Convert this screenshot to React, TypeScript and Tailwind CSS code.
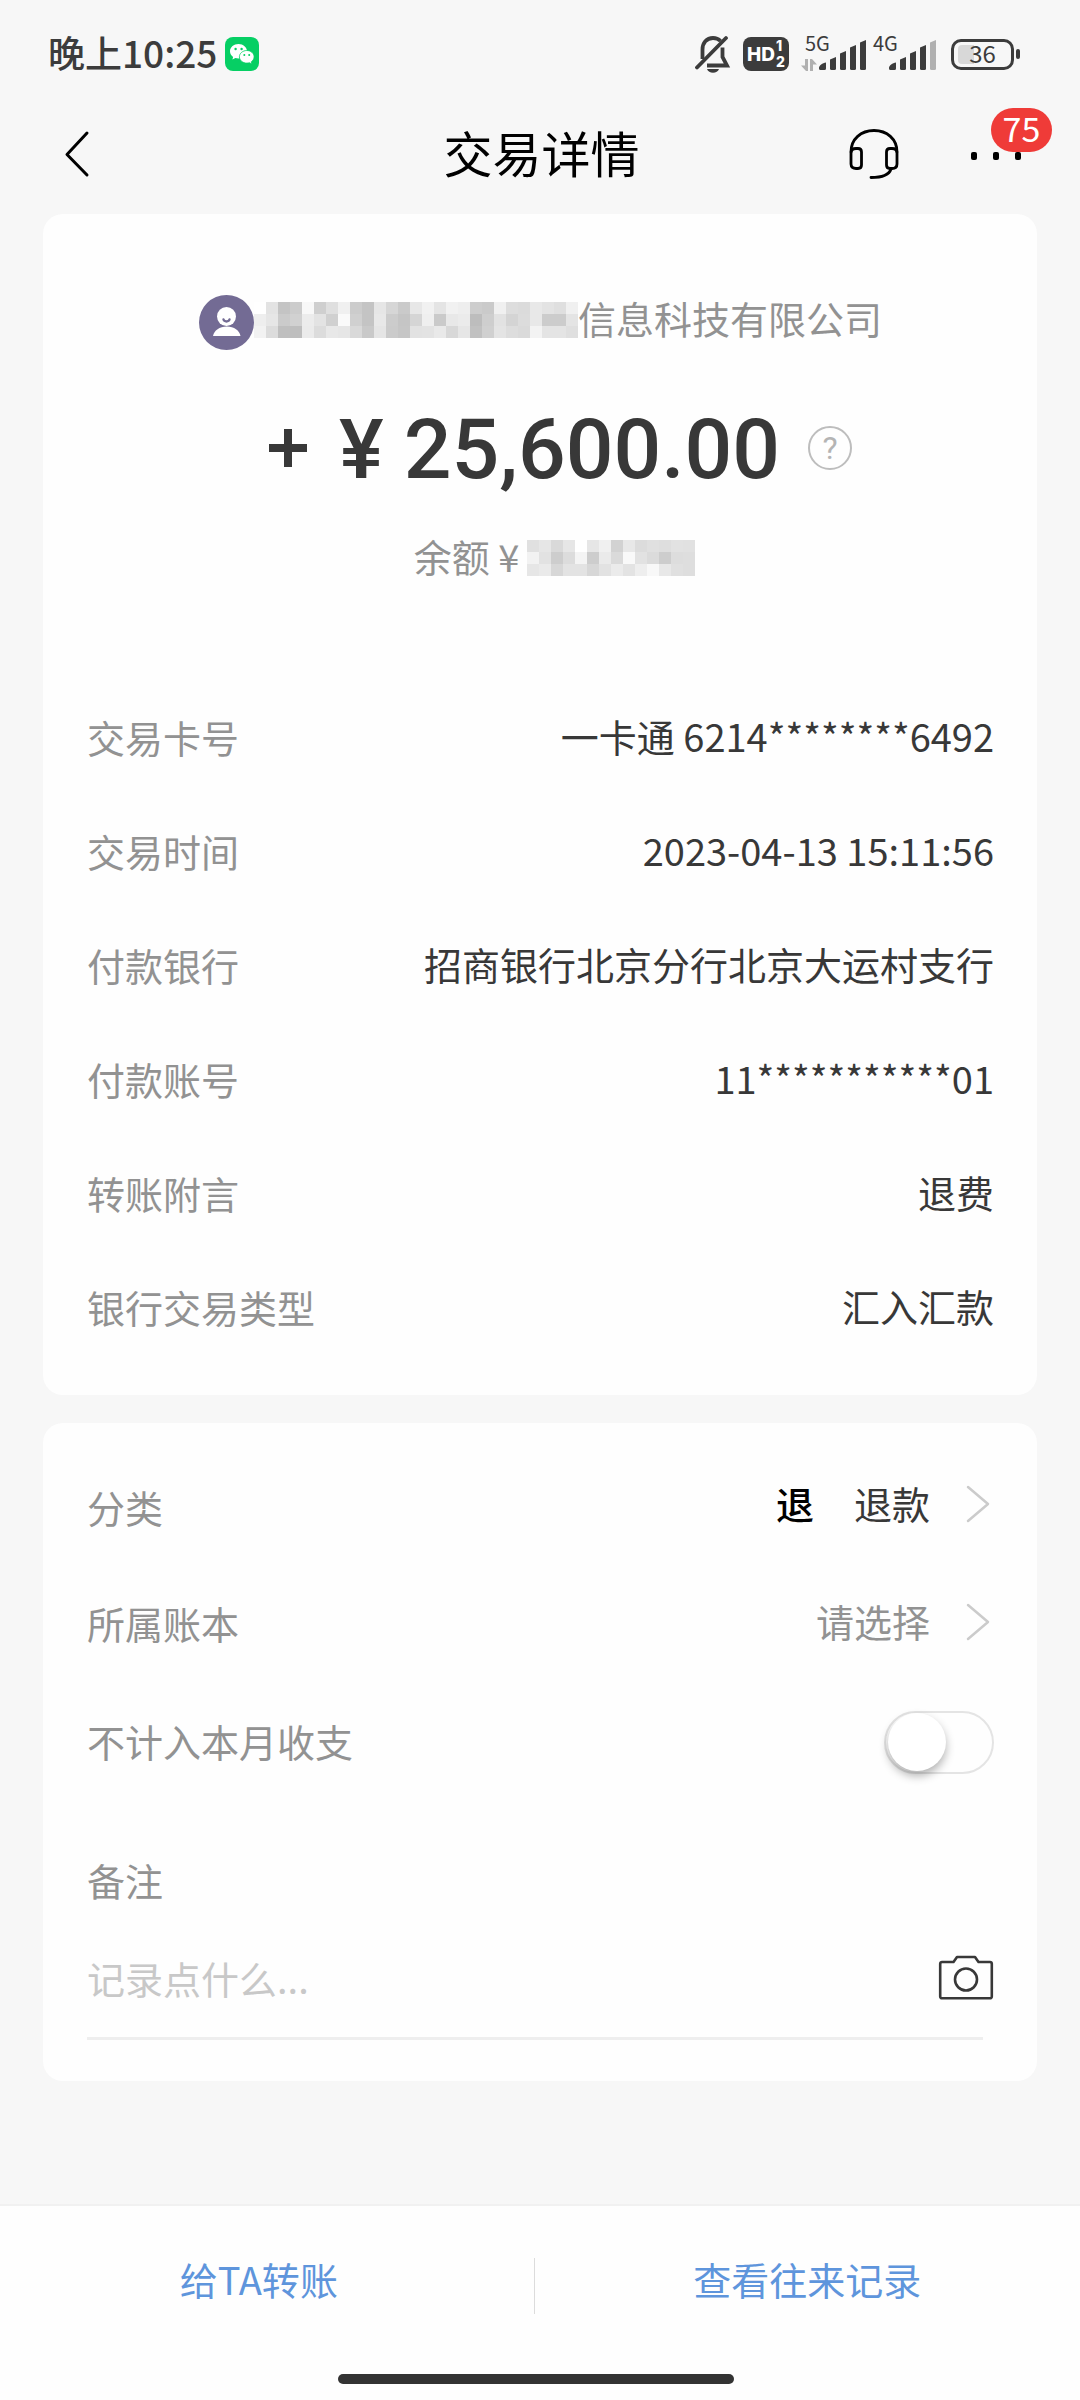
import type { ReactNode } from 'react';

const details = [
  { label: '交易卡号', value: '一卡通 6214********6492' },
  { label: '交易时间', value: '2023-04-13 15:11:56' },
  { label: '付款银行', value: '招商银行北京分行北京大运村支行' },
  { label: '付款账号', value: '11***********01' },
  { label: '转账附言', value: '退费' },
  { label: '银行交易类型', value: '汇入汇款' },
];

// Grey levels of the redaction blocks, two hex digits per cell
const NAME_MASK = [
  'ff e3 c4 cc f8 cf df f0 cc c4 e6 d6 ca e7 f1 e4 f1 ee cd ca f0 dd db e8 e3 df f0',
  'ee e6 cb d1 ec e3 d0 fa d0 c4 e8 cc c5 d5 ef ca e8 eb bd ce e2 d4 dc e8 cc cc e4',
  'f2 dc bf be eb dc e8 e6 d9 c9 e5 cb c6 e2 e3 e9 d8 e6 c1 d0 e4 dd da f3 e4 e4 df',
];
const BALANCE_MASK = [
  'e0 e6 d9 e6 ff e6 f0 d2 e8 dc e0 de e2 e1',
  'f2 e2 cd dc f4 cd ea da f9 e2 db cd dd de',
  'e6 ea d7 e3 e3 d7 e2 eb e3 ee f8 e8 e0 de',
];

function Mosaic({ rows }: { rows: string[] }) {
  const cells = rows.map((r) => r.split(' '));
  const w = cells[0].length * 12;
  return (
    <svg width={w} height={36} viewBox={`0 0 ${w} 36`} shapeRendering="crispEdges" className="shrink-0" aria-hidden="true">
      {cells.map((row, y) =>
        row.map((c, x) => <rect key={`${x}-${y}`} x={x * 12} y={y * 12} width={12} height={12} fill={`#${c}${c}${c}`} />),
      )}
    </svg>
  );
}

function WechatIcon() {
  return (
    <svg width="34" height="34" viewBox="0 0 34 34" aria-hidden="true">
      <rect width="34" height="34" rx="8" fill="#06cf64" />
      <path d="M13.500 7C8.800 7 5 10.200 5 14.300c0 2.300 1.200 4.300 3.100 5.600L7.400 22.500l3-1.500c1 .3 2 .4 3.100.4 4.700 0 8.500-3.200 8.500-7.100S18.200 7 13.500 7z" fill="#fff" />
      <path d="M21.800 13.500c-4.100 0-7.400 2.900-7.400 6.300s3.300 6.300 7.400 6.300c.9 0 1.800-.1 2.600-.4l2.500 1.400-.6-2.300c1.700-1.200 2.800-2.900 2.800-5 0-3.400-3.200-6.300-7.300-6.300z" fill="#fff" stroke="#06cf64" strokeWidth="0.800" />
      <g fill="#06cf64">
        <circle cx="10.600" cy="12" r="1.200" />
        <circle cx="16.600" cy="12" r="1.200" />
        <circle cx="19.300" cy="18" r="1" />
        <circle cx="24.200" cy="18" r="1" />
      </g>
    </svg>
  );
}

function BellOffIcon() {
  return (
    <svg width="36" height="38" viewBox="0 0 36 38" fill="none" stroke="#3c3c3c" strokeWidth="3.800" aria-hidden="true">
      <path d="M7.500 24V14.500C7.500 8 11.500 3 18 3c3.500 0 5.500 1 7.500 3" />
      <path d="M27.500 12.500v9.500l4.500 8.500H12" />
      <path d="M2 32.500L31 3" strokeLinecap="round" />
      <path d="M12 34h12c-1 2.600-3.200 3.800-6 3.800S13 36.600 12 34z" fill="#3c3c3c" stroke="none" />
    </svg>
  );
}

function SignalBars({ weak }: { weak?: boolean }) {
  return (
    <svg width="48" height="31" viewBox="0 0 48 31" fill="#3c3c3c" aria-hidden="true">
      <path d="M0 28c0-2.500 3.500-5 7-5.500V28.500a1.500 1.500 0 0 1-1.500 1.500H1.500A1.500 1.500 0 0 1 0 28.500z" />
      <path d="M11 19.500L17 17v11.500a1.500 1.500 0 0 1-1.500 1.500h-3a1.500 1.500 0 0 1-1.500-1.500z" />
      <path d="M21 13.500L27 11v17.500a1.500 1.500 0 0 1-1.500 1.500h-3a1.500 1.500 0 0 1-1.500-1.500z" />
      <path d="M31 7.500L37 5v23.500a1.500 1.500 0 0 1-1.500 1.500h-3a1.500 1.500 0 0 1-1.500-1.500z" />
      <path d="M41 2.500L47 0v28.500a1.500 1.500 0 0 1-1.500 1.500h-3a1.500 1.500 0 0 1-1.500-1.500z" fill={weak ? '#b0b0b0' : '#3c3c3c'} />
    </svg>
  );
}

function StatusBar() {
  return (
    <div className="flex h-[108px] items-center justify-between pl-12 pr-[60px] text-[#3c3c3c]">
      <div className="flex items-center gap-2">
        <span className="pb-1 text-[37px] font-medium leading-none">晚上10:25</span>
        <WechatIcon />
      </div>
      <div className="flex items-center">
        <BellOffIcon />
        <div className="ml-3 flex h-[34px] w-[46px] items-center justify-center gap-px rounded-lg bg-[#3c3c3c] font-['Inter',sans-serif] font-extrabold text-white">
          <span className="text-[19px] leading-none">HD</span>
          <span className="flex flex-col text-[14px] leading-4">
            <span>1</span>
            <span>2</span>
          </span>
        </div>
        <div className="ml-3 flex h-[34px] items-end">
          <div className="relative flex h-full w-[18px] items-end">
            <span className="absolute left-1 top-0 text-[20px] leading-3">5G</span>
            <svg width="16" height="12" viewBox="0 0 16 12" fill="#b0b0b0" aria-hidden="true">
              <path d="M4 0h3v12H5L0 6.500h4zM9 0h2l5 5.500h-4V12H9z" />
            </svg>
          </div>
          <SignalBars />
        </div>
        <div className="relative ml-[6px] flex h-[34px] w-[64px] items-end justify-end">
          <span className="absolute left-0 top-0 text-[20px] leading-3">4G</span>
          <SignalBars weak />
        </div>
        <div className="ml-[14px] flex items-center gap-0.5">
          <div className="relative flex h-[31px] w-[63px] items-center justify-center rounded-[10px] border-[3px] border-[#3c3c3c]">
            <span className="absolute inset-y-[3px] left-1 w-4 rounded-l-[4px] bg-[#d8d8d8]" />
            <span className="relative pb-0.5 text-[24px] leading-none">36</span>
          </div>
          <span className="h-[10px] w-1 rounded-sm bg-[#3c3c3c]" />
        </div>
      </div>
    </div>
  );
}

function Header() {
  return (
    <header className="grid h-[106px] grid-cols-3 items-center pb-[14px] pl-[62px] pr-[59px]">
      <button type="button" aria-label="返回" className="justify-self-start">
        <svg width="30" height="48" viewBox="0 0 30 48" fill="none" stroke="#000" strokeWidth="3" strokeLinecap="round" strokeLinejoin="round">
          <path d="M25 3L5 24.500 25 45" />
        </svg>
      </button>
      <h1 className="pb-[6px] text-center text-[49px] leading-none text-black">交易详情</h1>
      <div className="flex items-center justify-end gap-[71px]">
        <button type="button" aria-label="客服">
          <svg width="52" height="52" viewBox="0 0 52 52" fill="none" stroke="#000" strokeWidth="2.800" strokeLinecap="round" strokeLinejoin="round">
            <path d="M3 24C3 11 13 2.500 26 2.500S49 11 49 24" />
            <path d="M3 25c0-3 2-4.500 5-4.500h2c2.500 0 3.500 1 3.500 3.500v13c0 2.500-1 3.500-3.500 3.500H8c-3 0-5-1.500-5-4.500z" />
            <path d="M49 25c0-3-2-4.500-5-4.500h-2c-2.500 0-3.500 1-3.500 3.500v13c0 2.500 1 3.500 3.500 3.500h2c3 0 5-1.500 5-4.500z" />
            <path d="M43 41c-2 6.500-9 8.500-20 8.500" />
          </svg>
        </button>
        <button type="button" aria-label="更多" className="relative flex h-12 items-center gap-4 pt-1">
          <span className="h-2 w-[6px] rounded-xs bg-black" />
          <span className="h-2 w-[6px] rounded-xs bg-black" />
          <span className="h-2 w-[6px] rounded-xs bg-black" />
          <span className="absolute -top-[22px] left-5 flex h-11 w-[61px] items-center justify-center rounded-full bg-[#ef3b38] pb-1 text-[34px] leading-none text-white">
            75
          </span>
        </button>
      </div>
    </header>
  );
}

function Avatar() {
  return (
    <svg width="55" height="55" viewBox="0 0 55 55" className="shrink-0" aria-hidden="true">
      <circle cx="27.500" cy="27.500" r="27.500" fill="#736b94" />
      <circle cx="27.500" cy="21.500" r="9.500" fill="#fff" />
      <path d="M14 41c1-5.500 6.500-9.500 13.800-9.500S40.500 35.500 41.500 41z" fill="#fff" />
      <path d="M24.500 24.500c.8 2.600 5.200 2.600 6 0" fill="none" stroke="#736b94" strokeWidth="2.400" strokeLinecap="round" />
    </svg>
  );
}

function ChevronRight() {
  return (
    <svg width="26" height="40" viewBox="0 0 26 40" fill="none" stroke="#cbcbcb" strokeWidth="2.500" strokeLinecap="round" strokeLinejoin="round" aria-hidden="true">
      <path d="M2 3l20 17L2 37" />
    </svg>
  );
}

function Card({ children, className }: { children: ReactNode; className: string }) {
  return <section className={`mx-[43px] rounded-[20px] bg-[#fefefe] pl-11 pr-[43px] ${className}`}>{children}</section>;
}

export default function App() {
  return (
    <div className="flex min-h-screen flex-col bg-[#f7f7f7] font-['Noto_Sans_CJK_SC',sans-serif] text-[38px] text-[#383838]">
      <StatusBar />
      <Header />

      <main>
        <Card className="pb-[32px] pt-[80px]">
          <div className="flex h-[56px] items-center justify-center text-[#929292]">
            <Avatar />
            <span className="flex items-center pb-1">
              <Mosaic rows={NAME_MASK} />
              <span className="pb-1 leading-none">信息科技有限公司</span>
            </span>
          </div>

          <div className="mt-[48px] flex h-[100px] items-center justify-center pl-10">
            <svg width="38" height="38" viewBox="0 0 38 38" stroke="#383838" strokeWidth="8" role="img" aria-label="+">
              <path d="M0 19h38M19 0v38" />
            </svg>
            <span className="ml-8 pt-1 font-['Roboto',sans-serif] text-[84px] font-medium leading-none">¥</span>
            <span className="ml-5 pt-1 font-['Roboto',sans-serif] text-[84px] font-medium leading-none">25,600.00</span>
            <button
              type="button"
              aria-label="说明"
              className="ml-7 flex size-11 items-center justify-center rounded-full border-2 border-[#bdbdbd] font-['Roboto',sans-serif] text-[32px] leading-none text-[#b4b4b4]"
            >
              ?
            </button>
          </div>

          <div className="mt-[32px] flex h-[56px] items-center justify-center pl-7 text-[#929292]">
            <span className="pb-1 leading-none">余额 ¥</span>
            <span className="ml-2 flex">
              <Mosaic rows={BALANCE_MASK} />
            </span>
          </div>

          <dl className="mt-[93px]">
            {details.map((d) => (
              <div key={d.label} className="flex h-[114px] items-center justify-between">
                <dt className="text-[#929292]">{d.label}</dt>
                <dd className="pb-0.5">{d.value}</dd>
              </div>
            ))}
          </dl>
        </Card>

        <Card className="mt-[28px] pb-[41px] pt-[26px]">
          <div className="flex h-[114px] items-center justify-between">
            <span className="text-[#929292]">分类</span>
            <button type="button" className="flex items-center pb-2">
              <span className="font-medium text-black">退</span>
              <span className="ml-10">退款</span>
              <span className="ml-9 mr-0.5 pt-1">
                <ChevronRight />
              </span>
            </button>
          </div>
          <div className="flex h-[118px] items-center justify-between text-[#929292]">
            <span>所属账本</span>
            <button type="button" className="flex items-center pb-1">
              请选择
              <span className="ml-9 mr-0.5 pt-1">
                <ChevronRight />
              </span>
            </button>
          </div>
          <div className="flex h-[118px] items-center justify-between">
            <label htmlFor="exclude" className="text-[#929292]">
              不计入本月收支
            </label>
            <input
              id="exclude"
              type="checkbox"
              role="switch"
              className="mt-1 flex h-[63px] w-[110px] appearance-none rounded-full border-2 border-[#e4e4e4] bg-[#fefefe] pl-[2px] before:size-[58px] before:rounded-full before:bg-white before:shadow-[0_5px_10px_rgba(0,0,0,0.3)] checked:justify-end checked:bg-green-500"
            />
          </div>
          <div className="mt-[51px]">
            <label htmlFor="remark" className="block h-[60px] leading-[60px] text-[#929292]">
              备注
            </label>
            <div className="mt-[38px] flex h-[60px] items-center">
              <input
                id="remark"
                type="text"
                placeholder="记录点什么..."
                className="min-w-0 flex-1 bg-transparent pb-0.5 outline-none placeholder:text-[#c8c8c8]"
              />
              <button type="button" aria-label="拍照">
                <svg width="56" height="48" viewBox="0 0 56 48" fill="none" stroke="#383838" strokeWidth="2.600" strokeLinejoin="round">
                  <path d="M4 8h11.500L19 3h18l3.500 5H52a1.800 1.800 0 0 1 1.800 1.800V42.500a1.800 1.800 0 0 1-1.800 1.800H4a1.800 1.800 0 0 1-1.800-1.800V9.800A1.800 1.800 0 0 1 4 8z" />
                  <circle cx="28" cy="25.500" r="11" />
                </svg>
              </button>
            </div>
          </div>
          <hr className="mr-[11px] mt-[29px] border-t-[3px] border-[#eeeeee]" />
        </Card>
      </main>

      <footer className="mt-auto border-t-2 border-[#f1f1f1] bg-[#fefefe] pb-4">
        <div className="flex h-[160px] items-center text-[#5e95dc]">
          <button type="button" className="flex-1 pb-4 pr-4">
            给TA转账
          </button>
          <span className="h-14 w-px bg-[#dcdcdc]" />
          <button type="button" className="w-[50.5%] pb-4">
            查看往来记录
          </button>
        </div>
        <div className="mt-2 flex justify-center pr-2">
          <span className="h-[10px] w-[37%] rounded-full bg-[#333333]" />
        </div>
      </footer>
    </div>
  );
}
